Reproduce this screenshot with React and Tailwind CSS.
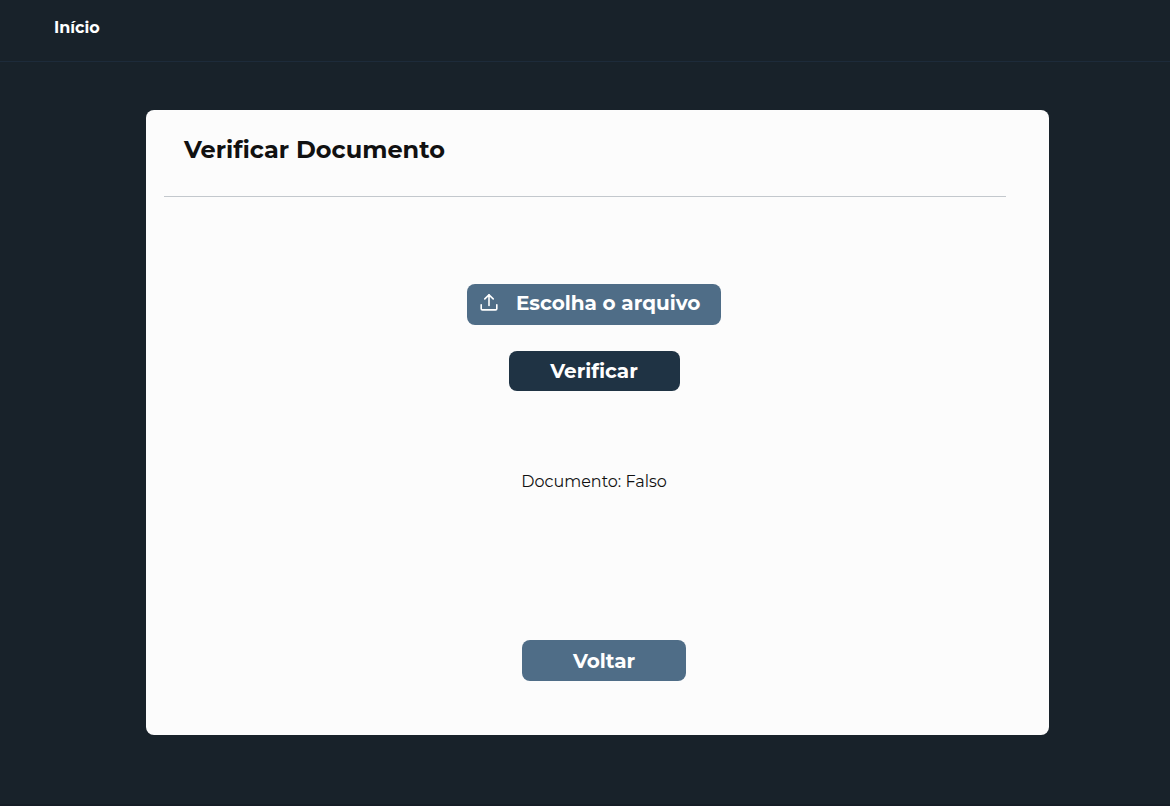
import { useRef } from "react";

function UploadIcon() {
  return (
    <svg viewBox="0 0 18 18" className="size-[18px] shrink-0" fill="none" stroke="currentColor" strokeWidth="1.6" strokeLinecap="round" strokeLinejoin="round" aria-hidden="true">
      <path d="M1.2 10.8v3.9a1.2 1.2 0 0 0 1.2 1.2h13.2a1.2 1.2 0 0 0 1.2-1.2v-3.9" />
      <path d="M9 11.4V.9" />
      <path d="M4.8 4.9 9 .9l4.2 4" />
    </svg>
  );
}

export default function App() {
  const fileInput = useRef(null);

  return (
    <div className="flex min-h-screen flex-col border-b-2 border-[#151d26] bg-[#18222a] font-['Montserrat','Inter',sans-serif]">
      <header className="border-b border-[#1d2b3a] pt-4 pr-[55px] pb-[21px] pl-[54px]">
        <nav>
          <a href="#inicio" className="block w-fit text-base leading-6 font-bold text-white">Início</a>
        </nav>
      </header>

      <main className="flex grow flex-col pt-12 pr-[121px] pb-[69px] pl-[146px]">
        <section className="flex grow flex-col rounded-lg bg-[#fcfcfc] text-[#111111]">
          <div className="mr-[43px] ml-[18px] border-b border-[#c3c8cd] pt-6 pb-[30px] pl-5">
            <h1 className="text-2xl leading-8 font-bold">Verificar Documento</h1>
          </div>

          <div className="flex flex-col items-center pt-[87px] pr-[7px]">
            <input ref={fileInput} type="file" className="hidden" aria-label="Escolha o arquivo" />
            <button
              type="button"
              onClick={() => fileInput.current.click()}
              className="flex h-[41px] w-[254px] items-center gap-[18px] rounded-lg bg-[#4f6d87] pb-1 pl-[13px] text-[20px] leading-6 font-bold whitespace-nowrap text-white"
            >
              <UploadIcon />
              Escolha o arquivo
            </button>
            <button type="button" className="mt-[26px] h-10 w-[171px] rounded-lg bg-[#1f3344] text-[20px] leading-6 font-bold text-white">
              Verificar
            </button>
            <p className="mt-[79px] text-base leading-6">Documento: Falso</p>
          </div>

          <div className="mt-auto flex justify-center pb-[54px] pl-[13px]">
            <button type="button" className="h-[41px] w-[164px] rounded-lg bg-[#4f6d87] text-[20px] leading-6 font-bold text-white">
              Voltar
            </button>
          </div>
        </section>
      </main>
    </div>
  );
}
